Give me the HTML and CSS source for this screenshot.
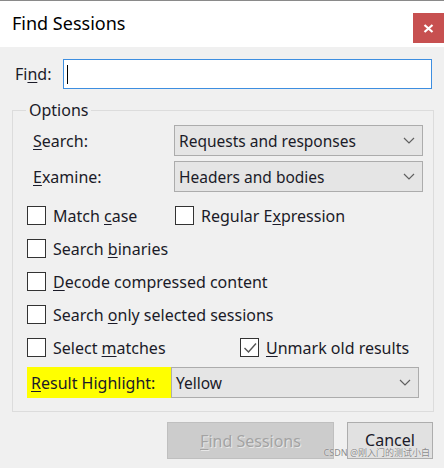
FILE: index.html
```html
<!DOCTYPE html>
<html>
<head>
<meta charset="utf-8">
<link rel="stylesheet" href="styles.css">
</head>
<body>
<div class="window">
  <div class="titlebar">
    <div class="title">Find Sessions</div>
    <div class="close"><svg width="11" height="9" viewBox="0 0 11 9"><path d="M1.5 1 L9.5 8 M9.5 1 L1.5 8" stroke="#fff" stroke-width="2.2" fill="none"/></svg></div>
  </div>
  <div class="content">
    <div class="find-row">
      <span class="find-label">Fi<u>n</u>d:</span>
      <div class="input"><span class="caret"></span></div>
    </div>
    <fieldset class="group">
      <legend>Options</legend>
      <div class="sel-row">
        <span class="sel-label"><u>S</u>earch:</span>
        <div class="select"><span>Requests and responses</span><svg class="chev" width="12" height="7" viewBox="0 0 12 7"><path d="M1 1 L6 6 L11 1" stroke="#606060" stroke-width="1.2" fill="none"/></svg></div>
      </div>
      <div class="sel-row second">
        <span class="sel-label"><u>E</u>xamine:</span>
        <div class="select"><span>Headers and bodies</span><svg class="chev" width="12" height="7" viewBox="0 0 12 7"><path d="M1 1 L6 6 L11 1" stroke="#606060" stroke-width="1.2" fill="none"/></svg></div>
      </div>
      <div class="checks">
        <div class="crow">
          <label class="cb col1"><span class="box"></span><span>Match <u>c</u>ase</span></label>
          <label class="cb"><span class="box"></span><span>Regular E<u>x</u>pression</span></label>
        </div>
        <div class="crow">
          <label class="cb"><span class="box"></span><span>Search <u>b</u>inaries</span></label>
        </div>
        <div class="crow">
          <label class="cb"><span class="box"></span><span><u>D</u>ecode compressed content</span></label>
        </div>
        <div class="crow">
          <label class="cb"><span class="box"></span><span>Search <u>o</u>nly selected sessions</span></label>
        </div>
        <div class="crow">
          <label class="cb col1b"><span class="box"></span><span>Select <u>m</u>atches</span></label>
          <label class="cb"><span class="box checked"><svg width="16" height="16" viewBox="0 0 16 16"><path d="M2.5 8 L6.5 12 L14 3.5" stroke="#555" stroke-width="1.4" fill="none"/></svg></span><span><u>U</u>nmark old results</span></label>
        </div>
      </div>
      <div class="result-row">
        <span class="hl"><u>R</u>esult Highlight:</span>
        <div class="select narrow"><span>Yellow</span><svg class="chev" width="12" height="7" viewBox="0 0 12 7"><path d="M1 1 L6 6 L11 1" stroke="#606060" stroke-width="1.2" fill="none"/></svg></div>
      </div>
    </fieldset>
    <div class="buttons">
      <div class="btn disabled"><u>F</u>ind Sessions</div>
      <div class="btn cancel">Cancel</div>
    </div>
  </div>
  <div class="watermark">CSDN @刚入门的测试小白</div>
</div>
</body>
</html>
```
FILE: styles.css
```css
* { box-sizing: border-box; }
html, body { margin: 0; padding: 0; }
body {
  width: 444px;
  height: 468px;
  overflow: hidden;
  background: #f0f0f0;
  font-family: "Noto Sans", "Open Sans", sans-serif;
  font-size: 16px;
  color: #1b1b28;
}
u { text-decoration: underline; text-underline-offset: 2px; }
.window { position: relative; width: 444px; height: 468px; }
.titlebar {
  height: 47px;
  background: #fff;
  border-top: 1px solid #8a8a8a;
  display: flex;
  justify-content: space-between;
  align-items: flex-start;
}
.title {
  font-size: 18px;
  color: #000;
  padding-left: 12px;
  line-height: 24px;
  margin-top: 10px;
}
.close {
  width: 31px;
  height: 30px;
  margin-top: 12px;
  background: #c75050;
  display: flex;
  align-items: center;
  justify-content: center;
}
.content { padding: 12px 10px 0 12px; }
.find-row { display: flex; align-items: center; height: 30px; }
.find-label { width: 51px; padding-left: 3px; }
.input {
  width: 369px;
  height: 30px;
  background: #fff;
  border: 1px solid #3d8ee0;
  display: flex;
  align-items: center;
  padding-left: 3px;
}
.caret { width: 1px; height: 19px; background: #000; }
.group {
  margin: 11px 0 0 0;
  padding: 5px 10px 13px 14px;
  border: 1px solid #dcdcdc;
  width: 422px;
}
.group legend {
  margin-left: -1px;
  padding: 0 3px;
  line-height: 20px;
}
.sel-row { display: flex; align-items: center; height: 31px; }
.sel-row.second { margin-top: 5px; }
.sel-label { width: 147px; padding-left: 6px; }
.select {
  flex: 1;
  height: 31px;
  background: #e5e5e5;
  border: 1px solid #acacac;
  display: flex;
  align-items: center;
  justify-content: space-between;
  padding: 0 7px 0 4px;
  font-size: 15.5px;
}
.select.narrow { margin-right: 4px; }
.chev { display: block; }
.checks { margin-top: 7px; }
.crow { display: flex; align-items: center; height: 33px; }
.cb { display: flex; align-items: center; }
.cb.col1 { width: 148px; }
.cb.col1b { width: 213px; }
.box {
  width: 19px;
  height: 19px;
  border: 1px solid #333;
  background: #fff;
  margin-right: 7px;
  display: flex;
  align-items: center;
  justify-content: center;
}
.result-row { display: flex; align-items: center; height: 31px; margin-top: 3px; }
.hl {
  width: 144px;
  height: 31px;
  background: #ffff00;
  padding-left: 4px;
  display: flex;
  align-items: center;
}
.buttons {
  display: flex;
  justify-content: flex-end;
  gap: 13px;
  margin-top: 10px;
  padding-right: 1px;
}
.btn {
  height: 37px;
  display: flex;
  align-items: center;
  justify-content: center;
  font-size: 16px;
}
.btn.disabled {
  width: 167px;
  background: #cccccc;
  border: 1px solid #bfbfbf;
  color: #a3a3a3;
  text-shadow: 1px 1px 0 #e8e8e8;
}
.btn.cancel {
  width: 86px;
  background: #e1e1e1;
  border: 1px solid #adadad;
  color: #1a1a2a;
  padding-bottom: 2px;
}
.watermark {
  position: absolute;
  right: 14px;
  top: 447px;
  font-size: 9px;
  color: #8a8a8a;
  text-shadow: 0 0 1px #fff;
  font-family: "Noto Sans", "Noto Sans CJK SC", sans-serif;
  line-height: 12px;
}
```
